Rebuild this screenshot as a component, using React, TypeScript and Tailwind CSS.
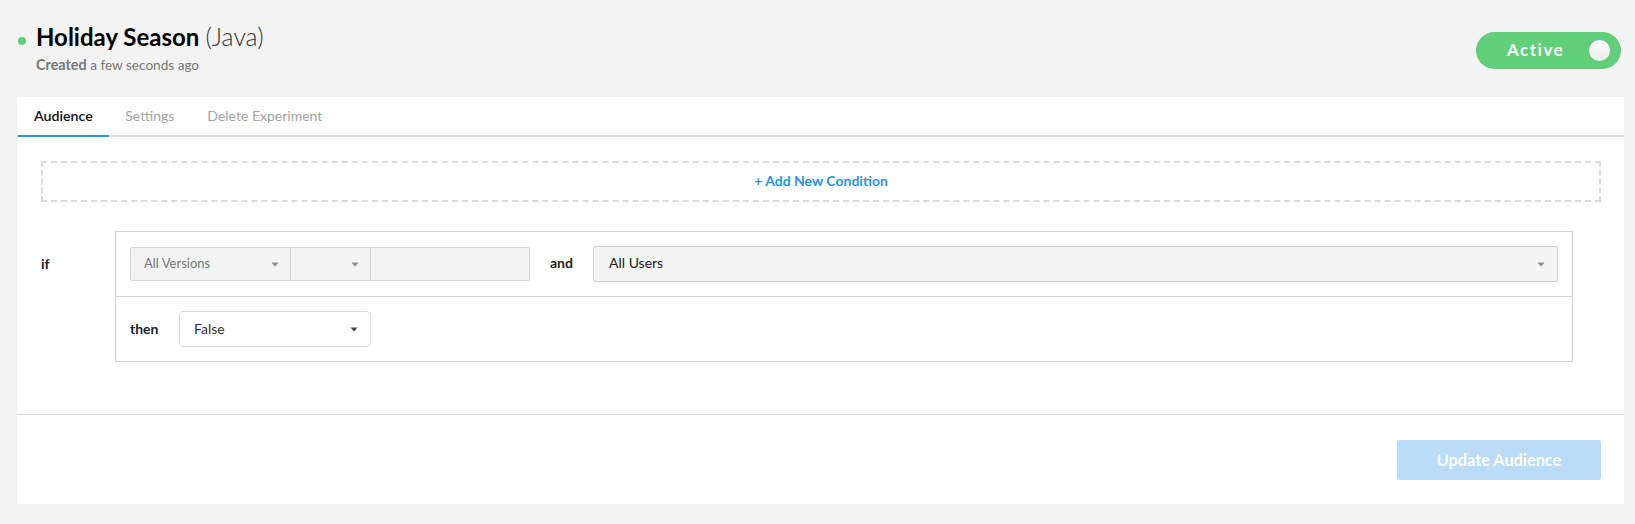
function Caret({ className = "" }: { className?: string }) {
  return (
    <svg width="8" height="5" viewBox="0 0 8 5" className={className}>
      <path d="M0.5 0.5H7.5L4 4.5Z" fill="currentColor" />
    </svg>
  );
}

export default function App() {
  return (
    <div className="min-h-[524px] bg-[#f3f3f3] pl-[17px] pr-[11px] pt-[20px] pb-[20px] font-['Lato',sans-serif] text-[#111]">
      <header className="flex h-[77px] items-start justify-between">
        <div className="flex items-start">
          <span className="mt-[17px] ml-[0.5px] mr-[10.5px] h-[8px] w-[8px] rounded-full bg-[#61cf7a]" />
          <div>
            <h1 className="-mt-[1px] text-[24px] leading-[36px]">
              <span className="font-bold text-black">Holiday Season</span>{" "}
              <span className="text-[24.8px] font-light text-[#333]">(Java)</span>
            </h1>
            <p className="text-[13.6px] leading-[20px] text-[#777]">
              <span className="text-[14.4px] font-bold">Created</span> a few seconds ago
            </p>
          </div>
        </div>
        <div className="mt-[12px] mr-[3px] flex h-[37px] w-[145px] items-center justify-between rounded-full bg-[#61cf7a] pl-[31px] pr-[11px]">
          <span className="pb-[2px] text-[17px] font-bold tracking-[1.5px] text-white">Active</span>
          <span className="h-[21px] w-[21px] rounded-full bg-gradient-to-b from-white to-[#ececec]" />
        </div>
      </header>

      <main className="bg-white">
        <nav className="flex h-[40px] border-b-2 border-[#dddddd] text-[14px]">
          <span className="ml-[0.5px] h-[40px] border-b-2 border-[#2a93e6] px-[16.5px] pt-[9px] text-[14.2px] leading-[20px] font-semibold text-[#111]">Audience</span>
          <span className="px-[16px] pt-[9px] leading-[20px] text-[#a3a3a3]">Settings</span>
          <span className="ml-[1px] px-[16px] pt-[9px] leading-[20px] text-[#a3a3a3]">Delete Experiment</span>
        </nav>

        <section className="pl-[24px] pr-[23px] pt-[24px] pb-[52px]">
          <div className="flex h-[41px] items-center justify-center border-2 border-dashed border-[#dcdcdc] pb-[2px] text-[14px] font-bold text-[#2a93e6]">
            + Add New Condition
          </div>

          <div className="mt-[29px] flex items-start pr-[28px]">
            <span className="w-[74px] pt-[23px] text-[14px] font-bold leading-[20px] text-[#222]">if</span>
            <div className="flex-1 border border-[#d4d4d4]">
              <div className="flex h-[65px] items-center border-b border-[#d4d4d4] pl-[14px] pr-[14px]">
                <div className="flex h-[34px] w-[400px] rounded-[2px] border border-[#d6d6d6] bg-[#f3f3f3] text-[13px] text-[#777]">
                  <div className="flex w-[160px] items-center justify-between border-r border-[#d6d6d6] pl-[13px] pr-[11px]">
                    <span>All Versions</span>
                    <Caret className="text-[#8a8a8a]" />
                  </div>
                  <div className="flex w-[80px] items-center justify-end border-r border-[#d6d6d6] pr-[11px]">
                    <Caret className="text-[#8a8a8a]" />
                  </div>
                  <div className="flex-1" />
                </div>
                <span className="w-[63px] pb-[4px] text-center text-[14px] font-bold text-[#222]">and</span>
                <div className="flex h-[36px] flex-1 items-center justify-between rounded-[2px] border border-[#d0d0d0] bg-[#f4f4f4] pl-[15px] pr-[12px] text-[14px] text-[#222]">
                  <span className="pb-[3px]">All Users</span>
                  <Caret className="text-[#8a8a8a]" />
                </div>
              </div>
              <div className="flex h-[64px] items-center pl-[14px]">
                <span className="w-[49px] pb-[2px] text-[14px] font-bold text-[#222]">then</span>
                <div className="flex h-[36px] w-[192px] items-center justify-between rounded-[4px] border border-[#dcdcdc] bg-white pl-[14px] pr-[12px] text-[14px] text-[#333]">
                  <span className="pb-[2px]">False</span>
                  <Caret className="text-[#444]" />
                </div>
              </div>
            </div>
          </div>
        </section>

        <footer className="flex h-[90px] justify-end border-t border-[#dcdcdc] pt-[25px] pr-[23px]">
          <button className="h-[40px] w-[204px] rounded-[2px] bg-[#badcf7] text-[16.3px] font-bold text-white">
            Update Audience
          </button>
        </footer>
      </main>
    </div>
  );
}
